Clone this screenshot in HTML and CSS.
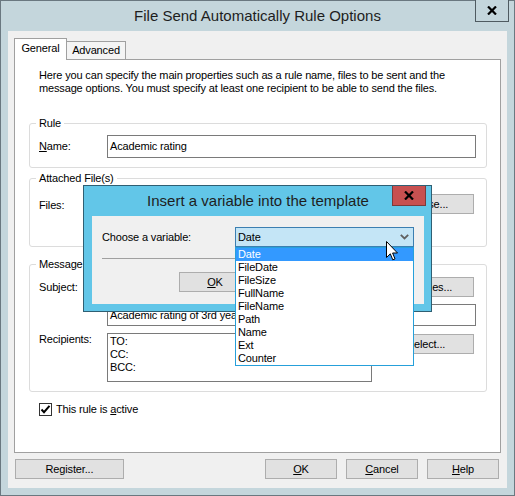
FILE: index.html
```html
<!DOCTYPE html>
<html>
<head>
<meta charset="utf-8">
<link rel="stylesheet" href="styles.css">
</head>
<body>
<div class="window">
  <div class="titlebar">
    <span class="title">File Send Automatically Rule Options</span>
    <span class="close"><svg width="10" height="9" viewBox="0 0 10 9"><path d="M1 0.5 L9 8.5 M9 0.5 L1 8.5" stroke="#000" stroke-width="2.2" fill="none"/></svg></span>
  </div>
  <div class="client">
    <div class="tabs">
      <div class="tab active">General</div>
      <div class="tab">Advanced</div>
    </div>
    <div class="panel">
      <p class="desc">Here you can specify the main properties such as a rule name, files to be sent and the<br>message options. You must specify at least one recipient to be able to send the files.</p>
      <fieldset class="group rule">
        <legend>Rule</legend>
        <div class="row center">
          <span class="lbl"><u>N</u>ame:</span>
          <div class="input grow h23">Academic rating</div>
        </div>
      </fieldset>
      <fieldset class="group files">
        <legend>Attached File(s)</legend>
        <div class="row">
          <span class="lbl files-lbl">Files:</span>
          <div class="input listbox"></div>
          <div class="btn side files-btn">Browse...</div>
        </div>
      </fieldset>
      <fieldset class="group message">
        <legend>Message</legend>
        <div class="row center">
          <span class="lbl">Subject:</span>
          <div class="input field h20"></div>
          <div class="btn side">Variables...</div>
        </div>
        <div class="row indent gap7">
          <div class="input grow h22">Academic rating of 3rd year</div>
        </div>
        <div class="row gap7">
          <span class="lbl">Recipients:</span>
          <div class="input field recips">TO:<br>CC:<br>BCC:</div>
          <div class="btn side select-btn">Select...</div>
        </div>
      </fieldset>
      <div class="check-row">
        <span class="checkbox"><svg width="11" height="11" viewBox="0 0 11 11"><path d="M1.5 5.5 L4 8.2 L9.5 1.8" stroke="#000" stroke-width="2" fill="none"/></svg></span>
        <span class="check-lbl">This rule is <u>a</u>ctive</span>
      </div>
    </div>
    <div class="buttons">
      <div class="btn reg">Register...</div>
      <div class="spacer"></div>
      <div class="btn w72"><u>O</u>K</div>
      <div class="btn w72 ml9"><u>C</u>ancel</div>
      <div class="btn w72 ml9"><u>H</u>elp</div>
    </div>
  </div>
</div>

<div class="dialog">
  <div class="dtitle">Insert a variable into the template</div>
  <span class="dclose"><svg width="10" height="9" viewBox="0 0 10 9"><path d="M1 0.5 L9 8.5 M9 0.5 L1 8.5" stroke="#000" stroke-width="2.2" fill="none"/></svg></span>
  <div class="dinner">
    <div class="drow">
      <span class="dlbl">Choose a variable:</span>
      <div class="combo">Date<svg class="chev" width="9" height="6" viewBox="0 0 9 6"><path d="M0.8 0.8 L4.5 4.5 L8.2 0.8" stroke="#606060" stroke-width="1.8" fill="none"/></svg></div>
    </div>
    <div class="sep"></div>
    <div class="dbuttons">
      <div class="btn w72"><u>O</u>K</div>
      <div class="btn w72 ml6">Cancel</div>
    </div>
  </div>
</div>

<ul class="droplist">
  <li class="sel">Date</li>
  <li>FileDate</li>
  <li>FileSize</li>
  <li>FullName</li>
  <li>FileName</li>
  <li>Path</li>
  <li>Name</li>
  <li>Ext</li>
  <li>Counter</li>
</ul>

<svg class="cursor" width="13" height="21" viewBox="0 0 13 21"><path d="M0.5 0.5 L0.5 16.5 L4.3 12.8 L6.8 18.8 L9 17.9 L6.6 12 L11.5 12 Z" fill="#fff" stroke="#000" stroke-width="1"/></svg>
</body>
</html>
```
FILE: styles.css
```css
html, body {
  margin: 0;
  padding: 0;
}
body {
  width: 515px;
  height: 496px;
  position: relative;
  font-family: "Liberation Sans", Arial, sans-serif;
  font-size: 11px;
  letter-spacing: -0.15px;
  color: #000;
  overflow: hidden;
}
u { text-decoration: underline; text-underline-offset: 1px; }

.window {
  width: 515px;
  height: 496px;
  box-sizing: border-box;
  border: 1px solid #6a7880;
  background: #c4d6dc;
  padding: 0 7px 7px 7px;
  display: flex;
  flex-direction: column;
  position: relative;
}
.titlebar {
  height: 30px;
  line-height: 30px;
  text-align: center;
  font-size: 15px;
  letter-spacing: 0;
  color: #1e1e1e;
}
.close {
  position: absolute;
  left: 474px;
  top: -1px;
  width: 34px;
  height: 22px;
  box-sizing: border-box;
  border: 1px solid #4f5b61;
  border-top: none;
  background: #c4d6dc;
  display: flex;
  align-items: center;
  justify-content: center;
}
.client {
  flex: 1;
  background: #f0f0f0;
  padding: 7px 6px 9px 6px;
  display: flex;
  flex-direction: column;
}
.tabs {
  height: 22px;
  margin-bottom: -1px;
  display: flex;
  align-items: flex-end;
  position: relative;
  z-index: 1;
}
.tab {
  box-sizing: border-box;
  text-align: center;
  line-height: 17px;
  border: 1px solid #a0a0a0;
}
.tab.active {
  width: 53px;
  height: 22px;
  padding-top: 1px;
  border-bottom: none;
  background: #fff;
}
.tab:not(.active) {
  width: 59px;
  height: 18px;
  margin-bottom: 1px;
  border-left: none;
  border-bottom: none;
  background: #f4f4f4;
}
.panel {
  height: 394px;
  box-sizing: border-box;
  border: 1px solid #a0a0a0;
  background: #fff;
  padding: 9px 13px 0 14px;
}
.desc {
  margin: 0 0 0 10px;
  line-height: 13px;
}
.group {
  margin: 0;
  border: 1px solid #dcdcdc;
  border-radius: 3px;
  padding: 0 10px 9px 9px;
  min-width: 0;
}
.group legend {
  padding: 0 3px;
  margin-left: -3px;
  line-height: 13px;
}
.rule { margin-top: 22px; padding-top: 5px; }
.files { margin-top: 4px; padding-top: 4px; padding-bottom: 8px; }
.message { margin-top: 11px; padding-top: 6px; }

.row {
  display: flex;
  align-items: flex-start;
  line-height: 13px;
}
.row.center { align-items: center; }
.row.indent { padding-left: 68px; }
.row.gap7 { margin-top: 7px; }
.lbl {
  width: 68px;
  flex: none;
}
.files-lbl { margin-top: 10px; }
.input {
  box-sizing: border-box;
  border: 1px solid #7a7a7a;
  background: #fff;
  padding: 0 2px;
}
.grow { flex: 1; }
.h23 { height: 23px; line-height: 21px; }
.h22 { height: 22px; line-height: 20px; }
.h20 { height: 20px; }
.field { width: 265px; flex: none; }
.listbox { width: 265px; height: 49px; }
.recips {
  height: 49px;
  padding-top: 1px;
  line-height: 13px;
}
.btn {
  box-sizing: border-box;
  height: 20px;
  line-height: 18px;
  border: 1px solid #adadad;
  background: #e1e1e1;
  text-align: center;
  flex: none;
}
.side {
  width: 96px;
  margin-left: 6px;
  margin-right: 2px;
}
.files-btn { margin-top: 5px; }
.select-btn { margin-top: 1px; }

.check-row {
  margin: 11px 0 0 10px;
  display: flex;
  align-items: center;
  line-height: 13px;
}
.checkbox {
  width: 13px;
  height: 13px;
  box-sizing: border-box;
  border: 1px solid #333;
  background: #fff;
  display: flex;
  align-items: center;
  justify-content: center;
}
.check-lbl { margin-left: 4px; }

.buttons {
  margin-top: 6px;
  height: 20px;
  display: flex;
  padding: 0 2px 0 1px;
}
.reg { width: 109px; }
.spacer { flex: 1; }
.w72 { width: 72px; }
.ml9 { margin-left: 9px; }
.ml6 { margin-left: 6px; }

/* modal dialog */
.dialog {
  position: absolute;
  left: 83px;
  top: 185px;
  width: 349px;
  height: 127px;
  box-sizing: border-box;
  border: 1px solid #2f5f73;
  background: #62c6e8;
  padding: 0 7px 7px 8px;
  display: flex;
  flex-direction: column;
  z-index: 5;
}
.dtitle {
  height: 30px;
  line-height: 30px;
  text-align: center;
  font-size: 15px;
  letter-spacing: 0;
  color: #1e1e1e;
}
.dclose {
  position: absolute;
  left: 308px;
  top: 0;
  width: 34px;
  height: 20px;
  box-sizing: border-box;
  border: 1px solid #7c3a3a;
  border-top: none;
  background: #c75050;
  display: flex;
  align-items: center;
  justify-content: center;
}
.dinner {
  flex: 1;
  background: #f0f0f0;
  padding: 11px 10px 0 10px;
}
.drow {
  display: flex;
  align-items: center;
  height: 20px;
}
.dlbl { width: 133px; flex: none; }
.combo {
  flex: 1;
  height: 20px;
  box-sizing: border-box;
  border: 1px solid #3c7fb1;
  background: #c4e5f6;
  padding-left: 2px;
  line-height: 18px;
  display: flex;
  align-items: center;
  justify-content: space-between;
}
.chev { margin-right: 4px; }
.sep {
  margin-top: 11px;
  height: 1px;
  background: #a0a0a0;
}
.dbuttons {
  margin-top: 13px;
  display: flex;
  padding-left: 77px;
}

.droplist {
  position: absolute;
  left: 235px;
  top: 247px;
  width: 179px;
  box-sizing: border-box;
  margin: 0;
  padding: 0;
  list-style: none;
  border: 1px solid #26a0da;
  background: #fff;
  z-index: 6;
}
.droplist li {
  height: 13px;
  line-height: 13px;
  padding-left: 2px;
}
.droplist li.sel {
  background: #3399ff;
  color: #fff;
}
.cursor {
  position: absolute;
  left: 386px;
  top: 241px;
  z-index: 7;
}
```
